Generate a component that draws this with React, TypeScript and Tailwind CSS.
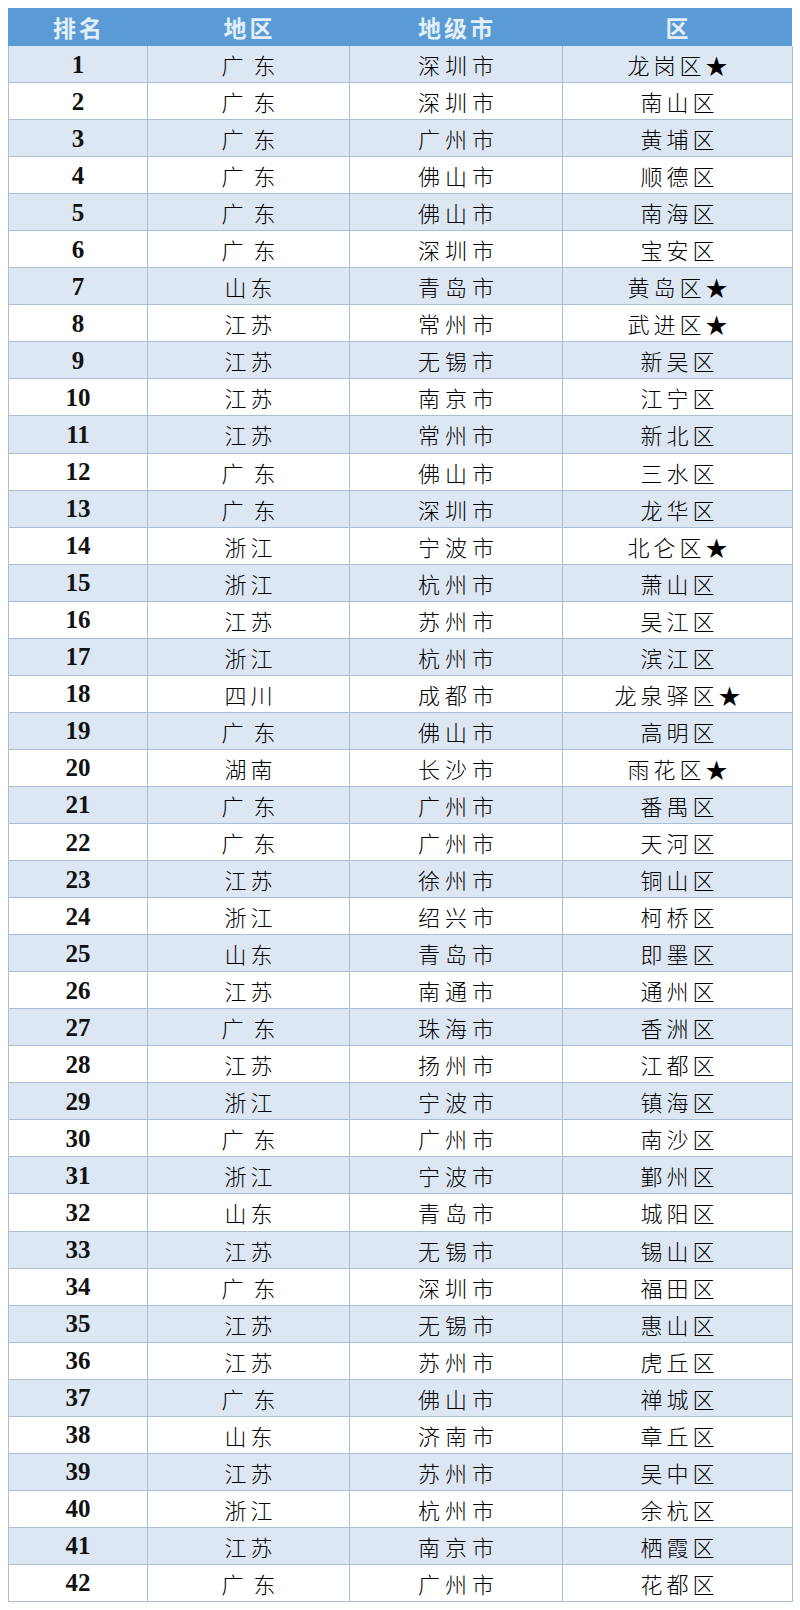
const rows: [string, string, string][] = [
  ['广东', '深圳市', '龙岗区★'],
  ['广东', '深圳市', '南山区'],
  ['广东', '广州市', '黄埔区'],
  ['广东', '佛山市', '顺德区'],
  ['广东', '佛山市', '南海区'],
  ['广东', '深圳市', '宝安区'],
  ['山东', '青岛市', '黄岛区★'],
  ['江苏', '常州市', '武进区★'],
  ['江苏', '无锡市', '新吴区'],
  ['江苏', '南京市', '江宁区'],
  ['江苏', '常州市', '新北区'],
  ['广东', '佛山市', '三水区'],
  ['广东', '深圳市', '龙华区'],
  ['浙江', '宁波市', '北仑区★'],
  ['浙江', '杭州市', '萧山区'],
  ['江苏', '苏州市', '吴江区'],
  ['浙江', '杭州市', '滨江区'],
  ['四川', '成都市', '龙泉驿区★'],
  ['广东', '佛山市', '高明区'],
  ['湖南', '长沙市', '雨花区★'],
  ['广东', '广州市', '番禺区'],
  ['广东', '广州市', '天河区'],
  ['江苏', '徐州市', '铜山区'],
  ['浙江', '绍兴市', '柯桥区'],
  ['山东', '青岛市', '即墨区'],
  ['江苏', '南通市', '通州区'],
  ['广东', '珠海市', '香洲区'],
  ['江苏', '扬州市', '江都区'],
  ['浙江', '宁波市', '镇海区'],
  ['广东', '广州市', '南沙区'],
  ['浙江', '宁波市', '鄞州区'],
  ['山东', '青岛市', '城阳区'],
  ['江苏', '无锡市', '锡山区'],
  ['广东', '深圳市', '福田区'],
  ['江苏', '无锡市', '惠山区'],
  ['江苏', '苏州市', '虎丘区'],
  ['广东', '佛山市', '禅城区'],
  ['山东', '济南市', '章丘区'],
  ['江苏', '苏州市', '吴中区'],
  ['浙江', '杭州市', '余杭区'],
  ['江苏', '南京市', '栖霞区'],
  ['广东', '广州市', '花都区'],
];

const cols = 'grid grid-cols-[139px_202px_213px_230px]';
const cjk = "font-['Noto_Sans_CJK_SC',sans-serif]";
const cell = `flex items-center justify-center border-r border-b border-[#a9bdd3] ${cjk} text-[22px] font-light leading-none text-black`;

export default function App() {
  return (
    <div className="w-[800px] h-[1610px] bg-white pt-[8px] pl-[8px]">
      <div className="w-[784px]">
        {/* header */}
        <div className={`${cols} h-[38px] bg-[#5b9bd5] text-[#e1eff9]`}>
          {['排名', '地区', '地级市', '区'].map((h) => (
            <div
              key={h}
              className={`flex items-center justify-center ${cjk} pl-[3px] text-[23px] font-bold leading-none tracking-[3px]`}
            >
              {h}
            </div>
          ))}
        </div>

        <div className="border-l border-[#a9bdd3]">
          {rows.map(([region, city, district], i) => (
            <div
              key={i}
              className={`${cols} h-[37.05px] ${i % 2 === 0 ? 'bg-[#dde7f3]' : 'bg-white'}`}
            >
              <div className="flex items-center justify-center border-r border-b border-[#a9bdd3] font-['Liberation_Serif',serif] text-[25px] font-bold leading-none text-[#111]">
                {i + 1}
              </div>
              {/* 广东 is typed with a wider gap in the source table */}
              {region === '广东' ? (
                <div className={`${cell} pl-[10px] tracking-[10px]`}>{region}</div>
              ) : (
                <div className={`${cell} pl-[4px] tracking-[4px]`}>{region}</div>
              )}
              <div className={`${cell} pl-[5px] tracking-[5px]`}>{city}</div>
              <div className={`${cell} pl-[4px] tracking-[4px]`}>{district}</div>
            </div>
          ))}
        </div>
      </div>
    </div>
  );
}
